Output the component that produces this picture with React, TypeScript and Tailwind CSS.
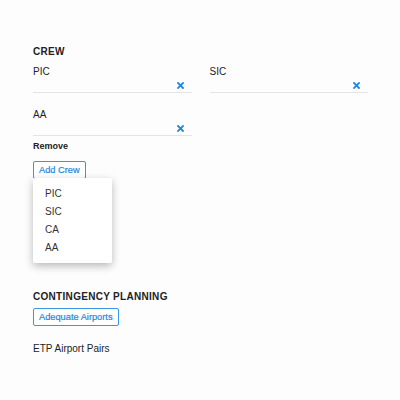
const blue = 'text-[#2586de]'

function ClearIcon() {
  return (
    <svg width="7" height="7" viewBox="0 0 7 7" className={blue}>
      <path d="M1 1L6 6M6 1L1 6" stroke="currentColor" strokeWidth="1.8" strokeLinecap="square" />
    </svg>
  )
}

function CrewField({ label }: { label: string }) {
  return (
    <div className="flex flex-col">
      <span className="text-[10px] leading-[12px] text-[#222]">{label}</span>
      <div className="flex h-[15px] items-center justify-end border-b border-[#e4e4e4] pr-[8px]">
        <ClearIcon />
      </div>
    </div>
  )
}

function OutlineButton({ children }: { children: string }) {
  return (
    <button
      type="button"
      className={`block h-[18px] rounded-[2px] border border-[#3b95e3] bg-white px-[5px] text-[9.25px] leading-[16px] [-webkit-text-stroke:0.2px_currentColor] ${blue}`}
    >
      {children}
    </button>
  )
}

export default function App() {
  return (
    <div className="min-h-[400px] bg-[#fefdfe] px-[33px] pt-[46px] font-['Liberation_Sans',Arial,sans-serif] text-[#222]">
      {/* Crew */}
      <h2 className="text-[10px] font-bold leading-[12px] tracking-[0.03em]">CREW</h2>
      <div className="mt-[8px] grid w-[335px] grid-cols-2 gap-x-[18px] gap-y-[16px]">
        <CrewField label="PIC" />
        <CrewField label="SIC" />
        <CrewField label="AA" />
      </div>
      <div className="mt-[5px] text-[9px] font-bold leading-[11px]">Remove</div>

      <div className="relative mt-[9px]">
        <OutlineButton>Add Crew</OutlineButton>
        <div className="absolute left-0 top-[17px] z-10 flex w-[79px] flex-col rounded-[2px] bg-white pb-[6px] pt-[7px] shadow-[0_3px_8px_rgba(0,0,0,0.28)]">
          {['PIC', 'SIC', 'CA', 'AA'].map((item) => (
            <div key={item} className="h-[18px] pl-[12px] text-[10px] leading-[18px] text-[#333]">
              {item}
            </div>
          ))}
        </div>
      </div>

      {/* Contingency planning */}
      <h2 className="mt-[112px] text-[10px] font-bold leading-[12px] tracking-[0.03em]">
        CONTINGENCY PLANNING
      </h2>
      <div className="mt-[5px]">
        <OutlineButton>Adequate Airports</OutlineButton>
      </div>
      <div className="mt-[17px] text-[10px] leading-[12px]">ETP Airport Pairs</div>
    </div>
  )
}
